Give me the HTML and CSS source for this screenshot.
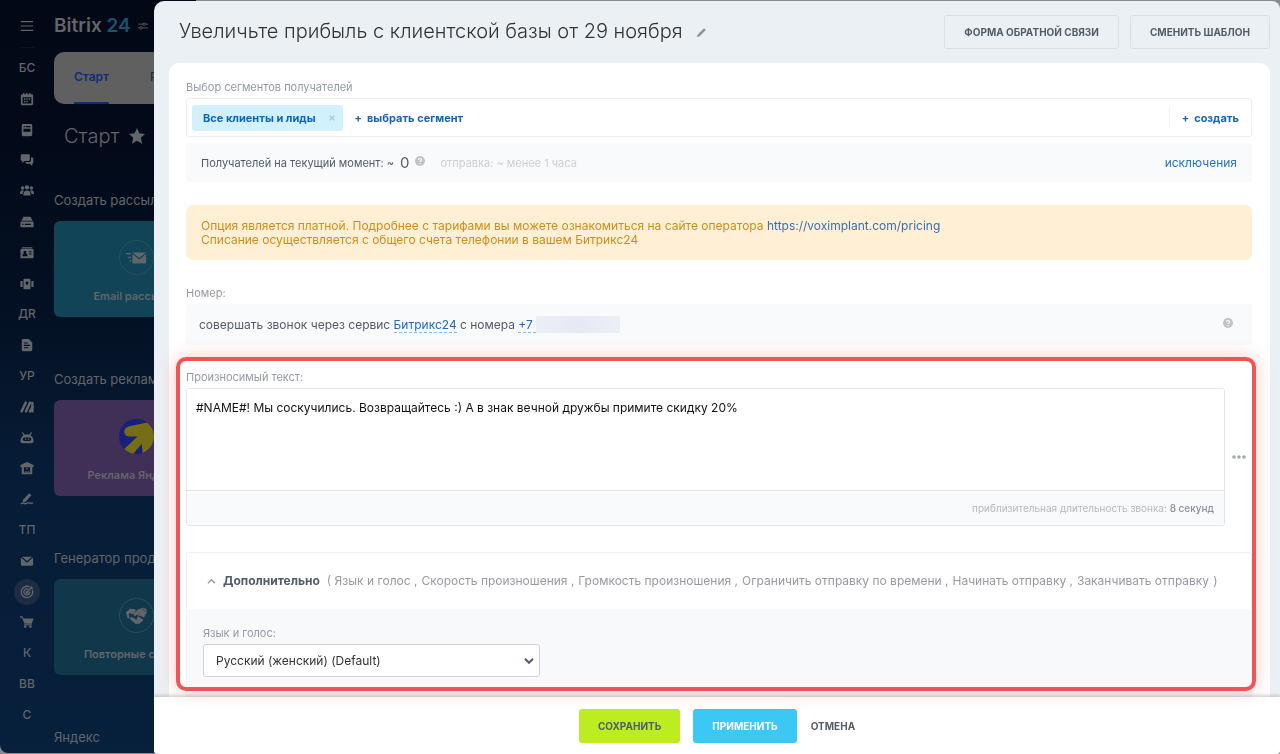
FILE: index.html
```html
<!DOCTYPE html>
<html lang="ru">
<head>
<meta charset="utf-8">
<title>Bitrix 24</title>
<link rel="stylesheet" href="styles.css">
</head>
<body>
<div class="portal">
  <nav class="rail" aria-label="Меню">
    <button class="rail-burger" aria-label="Меню"><svg viewBox="0 0 16 16" fill="none" stroke="currentColor" stroke-width="1.3"><path d="M1 3h14M1 8h14M1 13h14"/></svg></button>
    <div class="rail-line"></div>
    <ul class="rail-list">
      <li><a href="#">БС</a></li>
      <li><a href="#" aria-label="Календарь"><svg viewBox="0 0 16 16"><path fill-rule="evenodd" d="M3.500 1h1.500v1.500h2V1h1.500v1.500h2V1H12v1.500h1.500a1.500 1.500 0 0 1 1.500 1.500v9.500a1.500 1.500 0 0 1-1.500 1.500h-11A1.500 1.500 0 0 1 1 13.500V4a1.500 1.500 0 0 1 1.500-1.500h1zM3 6v7h10V6zm1.500 1.200h1.700v1.600H4.500zm2.700 0h1.700v1.600H7.200zm2.700 0h1.700v1.600H9.900zM4.500 10h1.700v1.600H4.500zm2.700 0h1.700v1.600H7.200z"/></svg></a></li>
      <li><a href="#" aria-label="Лента"><svg viewBox="0 0 16 16"><path fill-rule="evenodd" d="M3.500 1h9A1.500 1.500 0 0 1 14 2.500v11a1.500 1.500 0 0 1-1.500 1.500h-9A1.500 1.500 0 0 1 2 13.500v-11A1.500 1.500 0 0 1 3.500 1zM4 3.500v1.400h1.500V3.500zm2.500 0v1.400H12V3.500zM4 6.500V10h8V6.500z"/></svg></a></li>
      <li><a href="#" aria-label="Чат"><svg viewBox="0 0 16 16"><path d="M2 1.500h8a1.200 1.200 0 0 1 1.200 1.200v5A1.200 1.200 0 0 1 10 9H5.500L2.600 11.500V9H2A1.200 1.200 0 0 1 .8 7.700v-5A1.200 1.200 0 0 1 2 1.500z"/><path d="M12.500 5H14a1.200 1.200 0 0 1 1.200 1.200v5a1.200 1.200 0 0 1-1.200 1.200v2.400L11.200 12.400H7.500a1.200 1.200 0 0 1-1.200-1.200v-1h4.700a1.500 1.500 0 0 0 1.500-1.500z"/></svg></a></li>
      <li><a href="#" aria-label="Группы"><svg viewBox="0 0 16 16"><circle cx="8" cy="3.800" r="2.500"/><circle cx="3" cy="4.500" r="2"/><circle cx="13" cy="4.500" r="2"/><path d="M3.800 13c0-4 1.700-5.500 4.200-5.500s4.200 1.500 4.200 5.500zM0 11.500C0 8.500.8 7.200 2.800 7.200c.8 0 1.200.2 1.700.6-1 1-1.500 2.200-1.600 3.700zM16 11.500c0-3-.8-4.300-2.800-4.300-.8 0-1.200.2-1.700.6 1 1 1.500 2.200 1.600 3.700z"/></svg></a></li>
      <li><a href="#" aria-label="Диск"><svg viewBox="0 0 16 16"><path fill-rule="evenodd" d="M4 2h8l2.500 4.500h-13zM1.500 7.500h13a1 1 0 0 1 1 1V13a1 1 0 0 1-1 1h-13a1 1 0 0 1-1-1V8.500a1 1 0 0 1 1-1zM2.500 10v1.500H4V10zm3 0v1.500h7V10z"/></svg></a></li>
      <li><a href="#" aria-label="CRM"><svg viewBox="0 0 16 16"><path fill-rule="evenodd" d="M2 1.500h12v1.300H2zM1.500 3.500h13a1 1 0 0 1 1 1V13a1 1 0 0 1-1 1h-13a1 1 0 0 1-1-1V4.500a1 1 0 0 1 1-1zM5.500 5.300a1.700 1.700 0 0 0-1 3L2.800 10v1.700h5.700V10L6.700 8.300a1.700 1.700 0 0 0-1.200-3zM10 6v1.200h3.200V6zm0 2.600v1.200h3.200V8.600z"/></svg></a></li>
      <li><a href="#" aria-label="Склад"><svg viewBox="0 0 16 16"><path fill-rule="evenodd" d="M5 2h6a1 1 0 0 1 1 1v10a1 1 0 0 1-1 1H5a1 1 0 0 1-1-1V3a1 1 0 0 1 1-1zm3 3a1.700 1.700 0 0 0-1.700 1.700C6.300 8 8 9.500 8 9.500s1.700-1.500 1.700-2.800A1.700 1.700 0 0 0 8 5zM.5 4.500H3v7H.5zM13 4.500h2.500v7H13z"/></svg></a></li>
      <li><a href="#">ДR</a></li>
      <li><a href="#" aria-label="Документы"><svg viewBox="0 0 16 16"><path fill-rule="evenodd" d="M3.500 1H10l4 4v8.500a1.500 1.500 0 0 1-1.500 1.500h-9A1.500 1.500 0 0 1 2 13.500v-11A1.500 1.500 0 0 1 3.500 1zM4.500 5v1.200H9V5zm0 2.800V9h7V7.800zm0 2.800v1.200h5v-1.200z"/></svg></a></li>
      <li><a href="#">УР</a></li>
      <li><a href="#" aria-label="Маркет"><svg viewBox="0 0 16 16" fill="none" stroke="currentColor" stroke-width="2.800" stroke-linecap="round"><path d="M1.800 13 6.500 3M6.800 13l4.700-10M14.200 3.500V13"/><path d="M11.500 13l2.700-5"/></svg></a></li>
      <li><a href="#" aria-label="Роботы"><svg viewBox="0 0 16 16"><path fill-rule="evenodd" d="M3 1l2.500 3.200a7 7 0 0 1 5 0L13 1l.8.600-1.700 3.500C14.500 6.500 15.500 9 15.500 11.500c0 2-1 2.500-2.500 2.500H3c-1.500 0-2.500-.5-2.500-2.500 0-2.500 1-5 3.400-6.400L2.200 1.600zM4.500 7.500a2 2 0 0 0 0 3.800h7a2 2 0 0 0 0-3.800zM5.600 8.600h1.400v1.500H5.600zm3.500 0h1.400v1.500H9.100z"/></svg></a></li>
      <li><a href="#" aria-label="Компания"><svg viewBox="0 0 16 16"><path fill-rule="evenodd" d="M8 1l7.500 3.500V7H14v8H2V7H.5V4.500zM4.500 7v6H6v-1.500h1.300V13h1.500v-1.500H10V13h1.500V7zM7.200 8h1.600v1.800H7.200z"/></svg></a></li>
      <li><a href="#" aria-label="Подпись"><svg viewBox="0 0 16 16"><path d="M10.500 1.500l2.500 2.200-6.500 7.300-3.700 1.200.9-3.600z"/><path d="M1 13.500c2-1.200 3.200-.8 4.500-.2 2 .8 2.500-1.800 4-1 .8.500 1.500 1 5.500.2" fill="none" stroke="currentColor" stroke-width="1.500"/></svg></a></li>
      <li><a href="#">ТП</a></li>
      <li><a href="#" aria-label="Почта"><svg viewBox="0 0 16 16"><path d="M2 3h12L8 8zM1 4l7 6 7-6v8a1.300 1.300 0 0 1-1.300 1.300H2.300A1.300 1.300 0 0 1 1 12z"/></svg></a></li>
      <li><a href="#" class="rail-active" aria-label="Маркетинг"><svg viewBox="0 0 16 16" fill="none" stroke="currentColor" stroke-width="1.500"><path d="M11 2.200A6.500 6.500 0 1 0 14 5.500M9.500 5A3.400 3.400 0 1 0 11.200 7.500M8 8.300 13 3.200"/><circle cx="8" cy="8.300" r="1" fill="currentColor"/><path d="M12 4.500V2l1.500-1.200v2h2L14.200 4.500z" fill="currentColor" stroke="none"/></svg></a></li>
      <li><a href="#" aria-label="Магазин"><svg viewBox="0 0 16 16"><path d="M0 1.500h2.800L4 4h11.500L13.500 10H5.200L2.200 3H0z"/><path d="M4.500 10.500h9V12h-9z"/><circle cx="6" cy="13.500" r="1.400"/><circle cx="12" cy="13.500" r="1.400"/></svg></a></li>
      <li><a href="#">К</a></li>
      <li><a href="#">ВВ</a></li>
      <li><a href="#">С</a></li>
    </ul>
  </nav>
  <main class="desk">
    <div class="brand">
      <span>Bitrix <b>24</b></span>
      <svg viewBox="0 0 16 16" fill="none" stroke="currentColor" stroke-width="1.300"><path d="M0 5h8M12 5h4M0 11h3M7 11h9"/><circle cx="10" cy="5" r="2"/><circle cx="5" cy="11" r="2"/></svg>
    </div>
    <div class="tabs">
      <a href="#" class="tab tab-on">Старт</a>
      <a href="#" class="tab">Рассылки</a>
    </div>
    <h2 class="desk-title">Старт <svg viewBox="0 0 16 16"><path d="M8 0l2.400 5.300 5.600.6-4.200 3.900 1.200 5.900L8 12.700l-5 3 1.200-5.900L0 5.900l5.600-.6z"/></svg></h2>
    <section class="group">
      <h3>Создать рассылку</h3>
      <a href="#" class="tile tile-cyan">
        <span class="tile-ring"><svg viewBox="0 0 24 24"><path d="M8 6h15l-7.500 6zM8 7.500l7.500 6 7.500-6V17a1 1 0 0 1-1 1H9a1 1 0 0 1-1-1zM1 6.500h5.500V8H1zM3 10.500h3.500V12H3zM5 14.500h1.500V16H5z"/></svg></span>
        Email рассылка
      </a>
    </section>
    <section class="group">
      <h3>Создать рекламу</h3>
      <a href="#" class="tile tile-violet">
        <svg class="direct" viewBox="0 0 34 34"><defs><clipPath id="disc"><circle cx="17" cy="17" r="17"/></clipPath></defs><g clip-path="url(#disc)"><path fill="#17207a" d="M0 0h34v34H0z"/><path fill="#776d17" d="M9 17Q5 16 5 12 6 8 10 7L30 3 34 7V26L27 34 23 34 22 24 13 35 3 31 18 17z"/></g></svg>
        Реклама Яндекса
      </a>
    </section>
    <section class="group">
      <h3>Генератор продаж</h3>
      <a href="#" class="tile tile-teal">
        <span class="tile-ring"><svg viewBox="0 0 24 24"><path d="M1 8 6 4l5 1 1 1-3 4 2 2 4-3 5 4 3-5-3-4h-4l-4 1 3-1 4-1 4 1 1 4-3 5z"/><path d="M1 8l5-4 5 1-1 1H7l-3 4 1 4-2 1zM14 5l5-1 4 4-3 6-5-5-4 3-2-2z"/><path d="M5 14l2-1 2 1 2 1 2 2 1 3-2 1-5-4zM14 12l6 4-1 2-2 1-2 2-3-3z"/></svg></span>
        Повторные сделки
      </a>
    </section>
    <section class="group"><h3>Яндекс</h3></section>
  </main>
</div>

<div class="slider" role="dialog" aria-labelledby="mailing-title">
  <header class="slider-head">
    <h1 id="mailing-title">Увеличьте прибыль с клиентской базы от 29 ноября</h1>
    <button class="edit" aria-label="Изменить название"><svg viewBox="0 0 10 10"><path d="M0 10l.6-2.600L7.800.2 9.800 2.200 2.600 9.400z"/></svg></button>
    <div class="head-actions">
      <button class="btn btn-line">ФОРМА ОБРАТНОЙ СВЯЗИ</button>
      <button class="btn btn-line">СМЕНИТЬ ШАБЛОН</button>
    </div>
  </header>

  <form class="sheet" id="mailing">
    <div class="label">Выбор сегментов получателей</div>
    <div class="segments">
      <span class="chip">Все клиенты и лиды <button type="button" aria-label="Удалить"><svg viewBox="0 0 8 8" fill="none" stroke="currentColor" stroke-width="1.600"><path d="M1 1l6 6M7 1L1 7"/></svg></button></span>
      <a href="#" class="add"><span>+</span>выбрать сегмент</a>
      <a href="#" class="add add-new"><span>+</span>создать</a>
    </div>
    <div class="bar">
      <span>Получателей на текущий момент: ~</span>
      <span class="count">0</span>
      <svg class="help help-up" viewBox="0 0 12 12"><circle cx="6" cy="6" r="6"/><path d="M4.200 4.800C4.200 2.400 7.900 2.500 7.800 4.700 7.700 5.900 6 5.900 6 7.300M6 8.300v1.300" fill="none" stroke="#fff" stroke-width="1.300"/></svg>
      <span class="sending">отправка: ~ менее 1 часа</span>
      <a href="#" class="link push">исключения</a>
    </div>

    <div class="notice">Опция является платной. Подробнее с тарифами вы можете ознакомиться на сайте оператора <a href="#">https://voximplant.com/pricing</a><br>Списание осуществляется с общего счета телефонии в вашем Битрикс24</div>

    <div class="label">Номер:</div>
    <div class="bar bar-number">
      <span>совершать звонок через сервис <a href="#" class="dotted">Битрикс24</a> с номера <a href="#" class="dotted">+7&nbsp;</a></span>
      <span class="masked"></span>
      <svg class="help help-up push" viewBox="0 0 12 12"><circle cx="6" cy="6" r="6"/><path d="M4.200 4.800C4.200 2.400 7.900 2.500 7.800 4.700 7.700 5.900 6 5.900 6 7.300M6 8.300v1.300" fill="none" stroke="#fff" stroke-width="1.300"/></svg>
    </div>

    <section class="speech">
      <label class="label" for="speech-text">Произносимый текст:</label>
      <div class="speech-row">
        <div class="speech-box">
          <textarea id="speech-text">#NAME#! Мы соскучились. Возвращайтесь :) А в знак вечной дружбы примите скидку 20%</textarea>
          <div class="duration">приблизительная длительность звонка: <b>8 секунд</b></div>
        </div>
        <button type="button" class="dots" aria-label="Ещё"><svg viewBox="0 0 14 4"><circle cx="2" cy="2" r="1.800"/><circle cx="7" cy="2" r="1.800"/><circle cx="12" cy="2" r="1.800"/></svg></button>
      </div>
      <div class="more">
        <button type="button" class="more-head">
          <svg viewBox="0 0 10 6" fill="none" stroke="currentColor" stroke-width="1.500"><path d="M1 5.500l4-4 4 4"/></svg>
          <b>Дополнительно</b>
          <span class="more-list">
            <span>( Язык и голос ,</span><span>Скорость произношения ,</span><span>Громкость произношения ,</span><span>Ограничить отправку по времени ,</span><span>Начинать отправку ,</span><span>Заканчивать отправку</span><span>)</span>
          </span>
        </button>
        <div class="more-body">
          <label class="label" for="voice">Язык и голос:</label>
          <div class="select">
            <select id="voice"><option>Русский (женский) (Default)</option></select>
            <svg viewBox="0 0 10 6" fill="none" stroke="currentColor" stroke-width="2"><path d="M1 .8l4 4 4-4"/></svg>
          </div>
        </div>
      </div>
    </section>
  </form>

  <footer class="slider-foot">
    <button class="btn btn-save" form="mailing">СОХРАНИТЬ</button>
    <button class="btn btn-apply">ПРИМЕНИТЬ</button>
    <button class="btn btn-plain">ОТМЕНА</button>
  </footer>
</div>
</body>
</html>
```

FILE: styles.css
```css
* { box-sizing: border-box; }
body {
  margin: 0;
  height: 100vh;
  overflow: hidden;
  background: #878b8f;
  font: 11px/14px Inter, "Open Sans", sans-serif;
  font-optical-sizing: none;
  color: #525c69;
}
a { color: inherit; text-decoration: none; }
button { font: inherit; color: inherit; background: none; border: 0; padding: 0; cursor: pointer; }
h1, h2, h3, ul { margin: 0; padding: 0; font-weight: 400; list-style: none; }
svg { display: block; flex: none; fill: currentColor; }
svg[fill="none"] { fill: none; }

/* Dimmed portal under the slider */
.portal {
  display: flex;
  width: 196px;
  height: calc(100vh - 1px);
  color: #626569;
  background: linear-gradient(#020815 0, #020b1b 25%, #041226 45%, #061c36 62%, #07203c 100%);
  border-bottom-left-radius: 8px;
  overflow: hidden;
}
.rail { width: 54px; flex: none; display: flex; flex-direction: column; align-items: center; padding: 19px 0 25px; }
.rail svg { width: 14px; height: 14px; }
.rail-line { width: 14px; height: 1px; margin: 14px 0 7px; background: #0b1422; }
.rail-list { flex: 1; display: flex; flex-direction: column; justify-content: space-between; }
.rail-list a { display: grid; place-items: center; width: 26px; height: 26px; font-size: 12px; font-weight: 500; border-radius: 50%; }
.rail-list .rail-active { background: #1d2c42; }

.desk { width: 104px; flex: none; display: flex; flex-direction: column; overflow: hidden; }
.brand { display: flex; align-items: center; gap: 7px; height: 52px; flex: none; font-size: 19px; font-weight: 600; white-space: nowrap; }
.brand b { color: #15566e; font-weight: 600; }
.brand svg { width: 10px; height: 10px; }
.tabs { display: flex; gap: 41px; width: 220px; height: 52px; flex: none; padding: 0 20px; border-radius: 10px; background: #606060; color: #2b2b2b; font-size: 12px; font-weight: 500; }
.tab { display: flex; align-items: center; border-bottom: 2px solid transparent; }
.tab-on { color: #102e78; border-color: #102e78; font-weight: 600; }
.desk-title { display: flex; align-items: center; gap: 10px; height: 64px; flex: none; padding-left: 10px; font-size: 20px; font-weight: 300; }
.desk-title svg { width: 16px; height: 16px; }
.group { display: flex; flex-direction: column; height: 179px; flex: none; padding-top: 25px; }
.group h3 { font-size: 13px; line-height: 14px; margin-bottom: 14px; white-space: nowrap; }
.tile { display: flex; flex-direction: column; align-items: center; gap: 14px; width: 164px; height: 96px; padding-top: 19px; border-radius: 6px; font-weight: 600; line-height: 14px; white-space: nowrap; }
.tile-cyan { background: #104456; }
.tile-violet { background: #402f57; }
.tile-teal { background: #11374b; }
.tile-ring { display: grid; place-items: center; width: 35px; height: 35px; border: 1px solid #285160; border-radius: 50%; }
.tile-ring svg { width: 22px; height: 22px; }
.direct { width: 35px; height: 35px; }

/* Slider */
.slider {
  position: fixed;
  inset: 1px 0 0 154px;
  display: flex;
  flex-direction: column;
  overflow: hidden;
  background: #ebf0f4;
  border-radius: 10px 8px 4px 4px;
}
.slider-head { display: flex; align-items: center; height: 62px; flex: none; padding: 0 10px 0 25px; }
.slider-head h1 { margin-bottom: 3px; font-size: 20px; line-height: 28px; font-weight: 300; color: #333; white-space: nowrap; }
.edit { margin-left: 14px; color: #8d939b; }
.edit svg { width: 9px; height: 9px; }
.head-actions { display: flex; gap: 11px; margin-left: auto; }
.btn { height: 34px; padding: 0 19px; border-radius: 3px; font-size: 10px; font-weight: 700; white-space: nowrap; }
.btn-line { border: 1px solid #dbe0e4; color: #535c69; }

.sheet { flex: 1; display: flex; flex-direction: column; min-height: 0; margin: 0 10px 0 15px; padding: 17px 18px 0 17px; background: #fff; border-radius: 10px 10px 0 0; }
.label { display: block; line-height: 14px; margin-bottom: 4px; color: #959ba4; }
.segments { display: flex; align-items: center; height: 39px; flex: none; padding: 0 12px 0 5px; border: 1px solid #edeff1; border-radius: 3px; font-weight: 700; color: #1d62b0; }
.chip { display: flex; align-items: center; gap: 13px; height: 26px; padding: 0 8px 0 11px; border-radius: 3px; background: #d3f1fd; color: #0b66c3; }
.chip button { color: #a2cbe4; }
.chip svg { width: 6px; height: 6px; }
.add { display: flex; gap: 5px; margin-left: 12px; }
.add-new { margin-left: auto; padding: 3px 0 3px 12px; border-left: 1px solid #f0f2f4; }
.bar { display: flex; align-items: center; height: 39px; flex: none; margin-top: 6px; padding: 0 15px; border-radius: 3px; background: #f9fafc; }
.count { margin: 0 6px; font-size: 15px; }
.help { width: 10px; height: 10px; color: #bfc4c9; }
.help-up { margin-bottom: 4px; }
.sending { margin-left: 15px; color: #cdd1d5; }
.link { color: #2a72bd; font-size: 12px; }
.push { margin-left: auto; }
.notice { margin: 23px 0 26px; padding: 14px 15px 13px; border-radius: 7px; background: #ffefd5; color: #cc8f1e; font-size: 12px; line-height: 14px; }
.notice a { color: #3a6fae; }
.bar-number { height: 41px; margin-top: 0; padding: 0 19px 0 13px; font-size: 12px; }
.dotted { color: #2069bd; border-bottom: 1px dashed #8fb8df; }
.masked { width: 84px; height: 17px; background: linear-gradient(90deg, #eceff6, #e5e9f4 50%, #eceff6); }

.speech { position: relative; flex: 1; display: flex; flex-direction: column; min-height: 0; padding-top: 25px; }
.speech::after {
  content: "";
  position: absolute;
  z-index: 2;
  inset: 12px -4px 6px -10px;
  border: 4px solid #ee5555;
  border-radius: 10px;
  box-shadow: 0 0 18px rgba(238, 60, 60, .28);
  pointer-events: none;
}
.speech-row { display: flex; align-items: center; }
.speech-box { flex: 1; border: 1px solid #e3e6e9; border-radius: 3px; overflow: hidden; }
.speech-box textarea { display: block; width: 100%; height: 101px; padding: 12px 9px; border: 0; outline: 0; resize: none; font: inherit; font-size: 12px; color: #111; background: #fff; }
.duration { padding: 10px; border-top: 1px solid #e3e6e9; background: #f8fafb; text-align: right; font-size: 10px; line-height: 14px; color: #b5bac1; }
.duration b { color: #8b929c; font-weight: 500; }
.dots { display: grid; place-items: center; width: 27px; height: 20px; color: #a3a8b0; }
.dots svg { width: 14px; height: 4px; }
.more { flex: 1; display: flex; flex-direction: column; margin-top: 26px; border: 1px solid #f0f2f4; border-bottom: 0; border-radius: 3px 3px 0 0; }
.more-head { display: flex; align-items: center; gap: 7px; height: 56px; padding: 0 20px; font-size: 12px; white-space: nowrap; }
.more-head svg { width: 9px; height: 6px; color: #959ba4; }
.more-head b { font-weight: 700; color: #525c69; }
.more-list { display: flex; gap: 4px; color: #959ba4; }
.more-body { flex: 1; padding: 17px 16px; background: #f8f9fb; }
.select { position: relative; width: 337px; }
.select select { appearance: none; width: 100%; height: 33px; padding: 0 30px 0 12px; border: 1px solid #cfd4d9; border-radius: 3px; background: #fff; font: inherit; font-size: 12px; color: #333; }
.select svg { position: absolute; right: 6px; top: 14px; width: 10px; height: 6px; color: #525c69; pointer-events: none; }

.slider-foot { position: relative; display: flex; justify-content: center; align-items: center; height: 57px; flex: none; background: #fff; box-shadow: 0 -2px 3px rgba(0, 0, 0, .16); }
.btn-save { background: #bbed21; color: #535c69; margin-right: 13px; }
.btn-apply { background: #3bc8f5; color: #fff; }
.btn-plain { margin-left: 14px; padding: 0; }
```
